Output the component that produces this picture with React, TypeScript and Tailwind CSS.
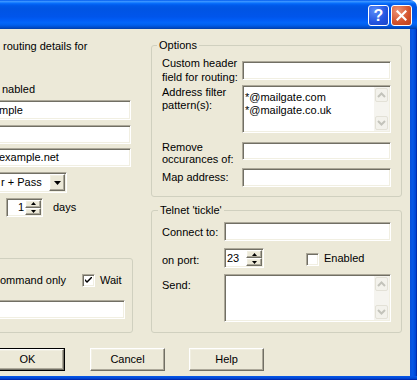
import React from "react";

const sunken =
  "bg-white border border-t-[#ACA899] border-l-[#ACA899] border-b-white border-r-white shadow-[inset_1px_1px_0_#716F64,inset_-1px_-1px_0_#F1EFE2]";
const raised =
  "bg-[#ECE9D8] border border-t-white border-l-white border-b-[#716F64] border-r-[#716F64] shadow-[inset_-1px_-1px_0_#ACA899,inset_1px_1px_0_#F1EFE2]";

const Field = ({ className = "", text = "" }: { className?: string; text?: string }) => (
  <div className={`${sunken} ${className} flex items-center overflow-hidden whitespace-nowrap`}>
    <span className="pl-[2px]">{text}</span>
  </div>
);

const Arrow = ({ up }: { up?: boolean }) => (
  <svg width="5" height="3" viewBox="0 0 5 3">
    <path d={up ? "M2.5 0 L5 3 L0 3 Z" : "M0 0 L5 0 L2.5 3 Z"} fill="#000" />
  </svg>
);

const Spin = ({ value, className = "", right }: { value: string; className?: string; right?: boolean }) => (
  <div className={`${sunken} ${className} flex items-stretch p-[1px]`}>
    <div className={`flex-1 flex items-center px-[1px] ${right ? "justify-end" : ""}`}>{value}</div>
    <div className="w-[16px] flex flex-col">
      <div className={`${raised} flex-1 flex items-center justify-center`}>
        <Arrow up />
      </div>
      <div className={`${raised} flex-1 flex items-center justify-center`}>
        <Arrow />
      </div>
    </div>
  </div>
);

const Check = ({ checked }: { checked?: boolean }) => (
  <div className={`${sunken} w-[13px] h-[13px] shrink-0 flex items-center justify-center`}>
    {checked && (
      <svg width="7" height="7" viewBox="0 0 7 7">
        <path d="M0 2 L0 4 L2 6 L7 1 L7 -1 L2 4 Z" fill="#000" />
      </svg>
    )}
  </div>
);

const Chevron = ({ up }: { up?: boolean }) => (
  <div className="h-[14px] mx-[1px] rounded-[2px] border border-[#E3E1D7] bg-[#F3F2EC] flex items-center justify-center">
    <svg width="9" height="6" viewBox="0 0 9 6">
      <path
        d={up ? "M1 5 L4.5 1.5 L8 5" : "M1 1 L4.5 4.5 L8 1"}
        stroke="#C3C3BB"
        strokeWidth="2"
        fill="none"
      />
    </svg>
  </div>
);

const Memo = ({ lines, className = "" }: { lines: string[]; className?: string }) => (
  <div className={`${sunken} ${className} flex p-[1px]`}>
    <div className="flex-1 pl-[1px] pt-[4px] leading-[13px]">
      {lines.map((l) => (
        <div key={l}>{l}</div>
      ))}
    </div>
    <div className="w-[15px] bg-[#F5F4EF] flex flex-col justify-between py-[1px]">
      <Chevron up />
      <Chevron />
    </div>
  </div>
);

const Button = ({ label, def, className = "" }: { label: string; def?: boolean; className?: string }) => (
  <div className={`${def ? "border border-black" : ""} ${className} w-[75px] h-[23px] flex`}>
    <div className={`${raised} flex-1 flex items-center justify-center`}>{label}</div>
  </div>
);

export default function App() {
  return (
    <div className="w-[417px] h-[380px] bg-white flex flex-col overflow-hidden text-[11px] leading-[13px] text-black font-['Liberation_Sans',Arial,sans-serif]">
      {/* title bar */}
      <div className="h-[29px] rounded-tr-[7px] flex justify-end items-start pt-[5px] pr-[5px] gap-[2px] bg-[linear-gradient(to_bottom,#0058EE_0%,#3A93FF_5%,#1A80FF_9%,#0366F8_13%,#0058E8_20%,#0054E3_30%,#0055EB_58%,#005CF5_68%,#0366FA_78%,#0060EE_86%,#0050D2_93%,#003FAA_100%)]">
        <div className="w-[21px] h-[21px] rounded-[3px] border border-white bg-[radial-gradient(circle_at_30%_25%,#5A8CF8,#2254E0_60%,#1A46C8)] flex items-center justify-center text-white font-bold text-[16px] leading-none">
          ?
        </div>
        <div className="w-[21px] h-[21px] rounded-[3px] border border-white bg-[radial-gradient(circle_at_30%_25%,#EE9477,#D3522C_60%,#C0401C)] flex items-center justify-center">
          <svg width="11" height="11" viewBox="0 0 11 11">
            <path d="M1.5 1.5 L9.5 9.5 M9.5 1.5 L1.5 9.5" stroke="#fff" strokeWidth="2.2" strokeLinecap="square" />
          </svg>
        </div>
      </div>

      <div className="flex flex-1">
        {/* dialog body */}
        <div className="w-[410px] bg-[#ECE9D8] flex flex-col overflow-hidden">
          <div className="flex">
            {/* left column (clipped) */}
            <div className="w-[133px] flex flex-col overflow-hidden">
              <div className="mt-[11px] pl-[3px] whitespace-nowrap">routing details for</div>
              <div className="mt-[30px] pl-[2px]">nabled</div>
              <Field className="mt-[4px] h-[20px] w-[135px] -ml-[4px]" text="  mple" />
              <Field className="mt-[5px] h-[19px] w-[135px] -ml-[4px]" />
              <Field className="mt-[4px] h-[19px] w-[135px] -ml-[4px]" text=" example.net" />
              <div className={`${sunken} mt-[5px] h-[21px] w-[71px] -ml-[4px] flex items-stretch p-[1px]`}>
                <div className="flex-1 flex items-center pl-[3px] whitespace-nowrap">r + Pass</div>
                <div className={`${raised} w-[16px] flex items-center justify-center`}>
                  <svg width="7" height="4" viewBox="0 0 7 4">
                    <path d="M0 0 L7 0 L3.5 4 Z" fill="#000" />
                  </svg>
                </div>
              </div>
              <div className="mt-[5px] flex items-center">
                <Spin value="1" right className="ml-[6px] h-[19px] w-[37px]" />
                <span className="ml-[10px]">days</span>
              </div>
              <div className="mt-[41px] h-[75px] w-[153px] -ml-[20px] border border-[#D0D0BF] rounded-[3px] flex flex-col pt-[15px] pl-[20px]">
                <div className="flex items-center h-[13px]">
                  <span className="w-[82px] -ml-[1px] whitespace-nowrap">ommand only</span>
                  <Check checked />
                  <span className="ml-[5px]">Wait</span>
                </div>
                <Field className="mt-[13px] h-[19px] w-[128px] -ml-[4px]" />
              </div>
            </div>

            {/* right column */}
            <div className="ml-[18px] w-[251px] flex flex-col">
              <fieldset className="mt-[10px] border border-[#D0D0BF] rounded-[3px] pb-[9px]">
                <legend className="ml-[5px] px-[2px] leading-[13px]">Options</legend>
                <div className="mt-[4px] flex items-start">
                  <div className="w-[90px] pl-[10px] leading-[14px]">
                    Custom header
                    <br />
                    field for routing:
                  </div>
                  <Field className="mt-[5px] h-[19px] w-[149px]" />
                </div>
                <div className="mt-[1px] flex items-start">
                  <div className="w-[90px] pl-[10px] mt-[1px]">
                    Address filter
                    <br />
                    pattern(s):
                  </div>
                  <Memo className="h-[48px] w-[149px]" lines={["*@mailgate.com", "*@mailgate.co.uk"]} />
                </div>
                <div className="mt-[8px] flex items-start">
                  <div className="w-[90px] pl-[10px] leading-[12px]">
                    Remove
                    <br />
                    occurances of:
                  </div>
                  <Field className="mt-[1px] h-[18px] w-[149px]" />
                </div>
                <div className="mt-[3px] flex items-start">
                  <div className="w-[90px] pl-[10px] mt-[3px]">Map address:</div>
                  <Field className="h-[19px] w-[149px]" />
                </div>
              </fieldset>

              <fieldset className="mt-[7px] border border-[#D0D0BF] rounded-[3px] pb-[10px]">
                <legend className="ml-[6px] px-[2px] leading-[13px]">Telnet 'tickle'</legend>
                <div className="mt-[5px] flex items-start">
                  <div className="w-[72px] pl-[10px] mt-[4px]">Connect to:</div>
                  <Field className="h-[19px] w-[167px]" />
                </div>
                <div className="mt-[7px] flex items-start">
                  <div className="w-[72px] pl-[10px] mt-[6px]">on port:</div>
                  <Spin value="23" className="h-[20px] w-[40px]" />
                  <div className="ml-[42px] mt-[5px]">
                    <Check />
                  </div>
                  <span className="ml-[5px] mt-[4px]">Enabled</span>
                </div>
                <div className="mt-[6px] flex items-start">
                  <div className="w-[72px] pl-[10px] mt-[5px]">Send:</div>
                  <Memo className="h-[48px] w-[167px]" lines={[]} />
                </div>
              </fieldset>
            </div>
          </div>

          {/* button row */}
          <div className="mt-[15px] flex">
            <Button label="OK" def className="-ml-[10px]" />
            <Button label="Cancel" className="ml-[25px]" />
            <Button label="Help" className="ml-[24px]" />
          </div>
        </div>
        {/* right frame */}
        <div className="w-[7px] bg-[linear-gradient(to_right,#0A4FD8,#0758E8_40%,#0046D4_80%,#001EA0)]" />
      </div>
      <div className="h-[4px] bg-[linear-gradient(to_bottom,#0758E8,#0046D4_60%,#001EA0)]" />
    </div>
  );
}
